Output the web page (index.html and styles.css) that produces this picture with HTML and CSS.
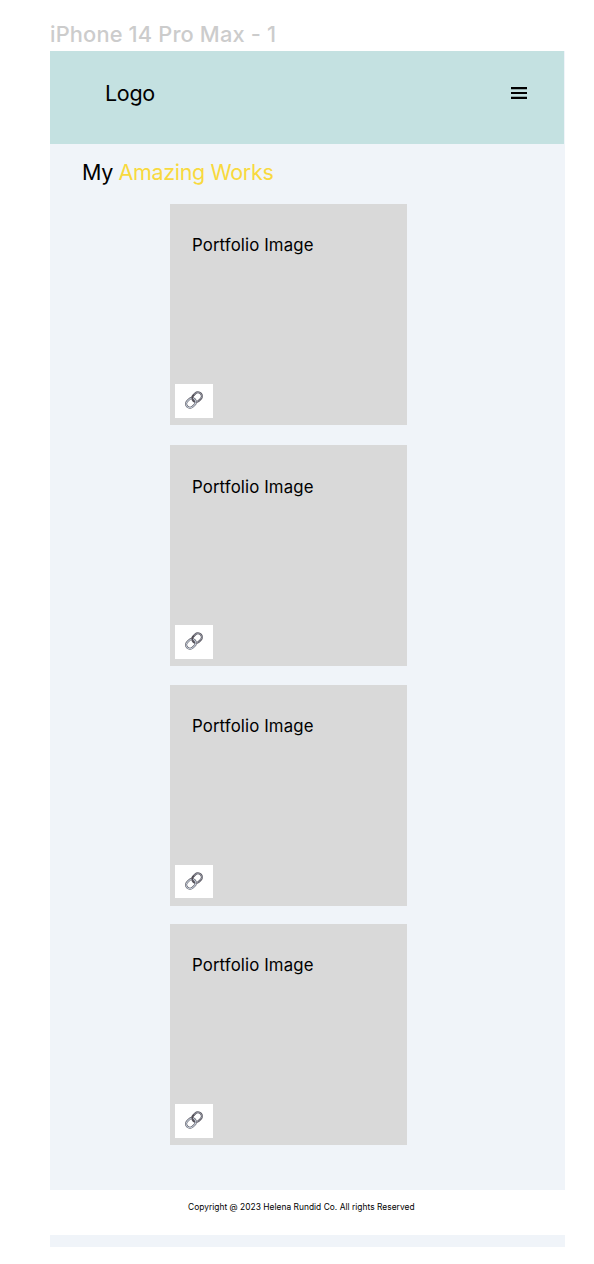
FILE: index.html
```html
<!DOCTYPE html>
<html lang="en">
<head>
<meta charset="utf-8">
<title>Portfolio</title>
<link rel="stylesheet" href="styles.css">
</head>
<body>
<svg class="defs" width="0" height="0" aria-hidden="true">
  <symbol id="link" viewBox="0 0 20 20">
    <g fill="none" transform="rotate(-44 10 10)">
      <g stroke="#55535c" stroke-width="2.4">
        <rect x="-0.4" y="5.7" width="11.4" height="8.6" rx="4.3"/>
        <rect x="9" y="5.7" width="11.4" height="8.6" rx="4.3"/>
      </g>
      <rect x="-0.4" y="5.7" width="11.4" height="8.6" rx="4.3" stroke="#c5cedb" stroke-width="1.2"/>
      <rect x="9" y="5.7" width="11.4" height="8.6" rx="4.3" stroke="#aeb2bd" stroke-width="0.8"/>
      <path d="M9 12V10Q9.2 6.8 11.6 5.9H14" stroke="#514c53" stroke-width="1.5"/>
    </g>
  </symbol>
</svg>
<div class="frame-label">iPhone 14 Pro Max - 1</div>
<main class="frame">
  <header class="header">
    <div class="logo">Logo</div>
    <svg class="menu" viewBox="0 0 18 14" role="img" aria-label="Menu"><path d="M1 2.1h16M1 7h16M1 11.9h16"/></svg>
  </header>
  <h1 class="title">My <span class="accent">Amazing Works</span></h1>
  <section class="works">
    <article class="card"><h2 class="card-title">Portfolio Image</h2><a class="link"><svg class="link-icon"><use href="#link"/></svg></a></article>
    <article class="card card-second"><h2 class="card-title">Portfolio Image</h2><a class="link"><svg class="link-icon"><use href="#link"/></svg></a></article>
    <article class="card"><h2 class="card-title">Portfolio Image</h2><a class="link"><svg class="link-icon"><use href="#link"/></svg></a></article>
    <article class="card"><h2 class="card-title">Portfolio Image</h2><a class="link"><svg class="link-icon"><use href="#link"/></svg></a></article>
  </section>
  <footer class="footer">Copyright @ 2023 Helena Rundid Co. All rights Reserved</footer>
</main>
</body>
</html>
```
FILE: styles.css
```css
* { box-sizing: border-box; }
body {
  margin: 0;
  padding: 20px 0 17px 50px;
  background: #fff;
  color: #000;
  font-family: Inter, sans-serif;
}
.defs { display: none; }
.frame-label {
  height: 31px;
  font-size: 21.8px;
  line-height: 28px;
  font-weight: 450;
  letter-spacing: 0.16px;
  color: #ccc;
  white-space: nowrap;
}
.frame {
  display: flex;
  flex-direction: column;
  width: 515px;
  height: 1196px;
  background: #f0f4f9;
}
.header {
  display: flex;
  justify-content: space-between;
  width: 514px;
  height: 93px;
  padding: 28px 36.5px 0 55px;
  background: #c4e1e1;
}
.logo {
  font-size: 21.5px;
  line-height: 28px;
  font-weight: 370;
  letter-spacing: -0.33px;
}
.menu {
  width: 18px;
  height: 14px;
  margin-top: 7px;
  fill: none;
  stroke: #000;
  stroke-width: 2.2;
}
.title {
  height: 60px;
  margin: 0;
  padding: 14px 0 0 32px;
  font-size: 21.5px;
  line-height: 28px;
  font-weight: 370;
  letter-spacing: -0.35px;
}
.accent { color: #f8d93e; }
.works {
  display: flex;
  flex-direction: column;
  gap: 18.4px;
  height: 986px;
  padding-left: 120px;
}
.card {
  display: flex;
  flex: none;
  flex-direction: column;
  justify-content: space-between;
  align-items: flex-start;
  width: 237px;
  height: 221px;
  padding: 30.2px 0 7.5px 4.6px;
  background: #d9d9d9;
}
.card-second { margin-top: 2px; }
.card-title {
  margin: 0 0 0 17.4px;
  font-size: 16.8px;
  line-height: 22px;
  font-weight: 400;
  letter-spacing: 0.12px;
}
.link {
  display: flex;
  width: 38.5px;
  height: 33.5px;
  padding: 7px 0 0 10.6px;
  background: #fff;
}
.link-icon {
  width: 18px;
  height: 18px;
  overflow: visible;
}
.footer {
  height: 45px;
  padding: 11px 0 0 138px;
  background: #fff;
  font-size: 8.4px;
  line-height: 13px;
  letter-spacing: 0.03px;
}
```
